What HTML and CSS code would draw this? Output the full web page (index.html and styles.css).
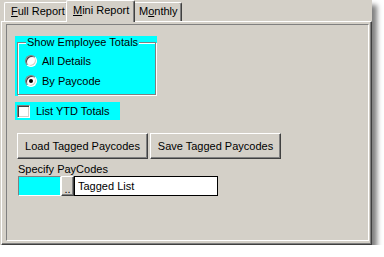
FILE: index.html
```html
<!DOCTYPE html>
<html lang="en">

<head>
    <meta charset="UTF-8">
    <meta name="viewport" content="width=device-width, initial-scale=1.0">
    <title>Mini Report</title>
    <link rel="stylesheet" href="styles.css">
</head>

<body>
    <div class="window">
        <div class="tabs">
            <div class="tab tab-full"><u>F</u>ull Report</div>
            <div class="tab tab-mini active"><u>M</u>ini Report</div>
            <div class="tab tab-monthly">M<u>o</u>nthly</div>
        </div>
        <div class="panel">
            <div class="page">
                <div class="group-wrap">
                    <div class="group">
                        <span class="legend">Show Employee Totals</span>
                        <div class="option"><span class="radio"></span>All Details</div>
                        <div class="option"><span class="radio checked"></span>By Paycode</div>
                    </div>
                </div>

                <div class="check-wrap"><span class="checkbox"></span>List YTD Totals</div>

                <div class="buttons">
                    <button class="btn btn-wide">Load Tagged Paycodes</button>
                    <button class="btn btn-wide">Save Tagged Paycodes</button>
                </div>

                <div class="label">Specify PayCodes</div>
                <div class="codes">
                    <div class="code-box"></div>
                    <button class="btn btn-dots">..</button>
                    <div class="code-field">Tagged List</div>
                </div>
            </div>
        </div>
    </div>
</body>

</html>
```

FILE: styles.css
```css
body {
    margin: 0;
    background-color: #fff;
    font-family: "Liberation Sans", Arial, sans-serif;
    font-size: 11px;
    color: #000;
}

.window {
    width: 372px;
    height: 245px;
    display: flex;
    flex-direction: column;
    background-color: #d4d0c8;
    box-shadow: 5px 5px 5px rgba(0, 0, 0, 0.5);
}

/* tab strip */
.tabs {
    height: 21px;
    flex-shrink: 0;
    display: flex;
    align-items: flex-end;
    padding-left: 4px;
}

.tab {
    box-sizing: border-box;
    height: 19px;
    padding: 2px 0 0 6px;
    line-height: 13px;
    white-space: nowrap;
    background-color: #d4d0c8;
    border-top: 1px solid #fff;
    border-left: 1px solid #fff;
    border-right: 1px solid #404040;
    border-radius: 2px 2px 0 0;
    box-shadow: inset -1px 0 0 #808080;
}

.tab-full {
    width: 64px;
}

.tab-mini {
    width: 69px;
}

.tab-monthly {
    width: 49px;
    padding-left: 5px;
}

.tab.active {
    height: 22px;
    padding-top: 3px;
    margin: 0 -2px -1px;
    position: relative;
    z-index: 1;
}

/* tab page */
.panel {
    flex: 1;
    display: flex;
    margin-left: 1px;
    border-top: 1px solid #fff;
    border-left: 1px solid #fff;
    border-right: 1px solid #404040;
    border-bottom: 1px solid #404040;
    box-shadow: inset -1px -1px 0 #808080;
}

.page {
    flex: 1;
    display: flex;
    flex-direction: column;
    align-items: flex-start;
    margin: 2px 2px 3px 4px;
    padding: 11px 0 0 8px;
    border: 1px solid;
    border-color: #808080 #fff #fff #808080;
}

/* group box */
.group-wrap {
    box-sizing: border-box;
    width: 142px;
    height: 60px;
    display: flex;
    flex-direction: column;
    padding: 6px 1px 1px 2px;
    background-color: #00ffff;
}

.group {
    flex: 1;
    display: flex;
    flex-direction: column;
    align-items: flex-start;
    border: 1px solid #808080;
    box-shadow: 1px 1px 0 #fff, inset 1px 1px 0 #fff;
}

.legend {
    margin: -7px 0 2px 8px;
    padding: 0 1px;
    line-height: 13px;
    background-color: #00ffff;
}

.option {
    height: 20px;
    display: flex;
    align-items: center;
    gap: 5px;
    padding-left: 7px;
}

.radio {
    box-sizing: border-box;
    width: 12px;
    height: 12px;
    display: flex;
    align-items: center;
    justify-content: center;
    border-radius: 50%;
    background-color: #fff;
    border: 1px solid;
    border-color: #808080 #fff #fff #808080;
    box-shadow: inset 1px 1px 0 #404040, inset -1px -1px 0 #d4d0c8;
}

.radio.checked::after {
    content: "";
    width: 4px;
    height: 4px;
    border-radius: 50%;
    background-color: #000;
}

/* checkbox */
.check-wrap {
    box-sizing: border-box;
    width: 105px;
    height: 18px;
    margin-top: 6px;
    padding-left: 2px;
    display: flex;
    align-items: center;
    gap: 6px;
    background-color: #00ffff;
}

.checkbox {
    box-sizing: border-box;
    width: 13px;
    height: 13px;
    background-color: #fff;
    border: 1px solid;
    border-color: #808080 #fff #fff #808080;
    box-shadow: inset 1px 1px 0 #404040, inset -1px -1px 0 #d4d0c8;
}

/* buttons */
.buttons {
    display: flex;
    gap: 2px;
    margin: 13px 0 0 2px;
}

.btn {
    box-sizing: border-box;
    padding: 0;
    font: inherit;
    color: #000;
    background-color: #d4d0c8;
    border: 1px solid;
    border-color: #fff #404040 #404040 #fff;
    box-shadow: inset -1px -1px 0 #808080;
}

.btn-wide {
    width: 131px;
    height: 26px;
}

.label {
    height: 14px;
    margin: 3px 0 0 3px;
    line-height: 14px;
}

.codes {
    height: 20px;
    display: flex;
    margin-left: 3px;
}

.code-box {
    box-sizing: border-box;
    width: 43px;
    background-color: #00ffff;
    border: 1px solid;
    border-color: #808080 #fff #fff #808080;
}

.btn-dots {
    width: 13px;
    padding-top: 6px;
    line-height: 10px;
}

.code-field {
    box-sizing: border-box;
    width: 144px;
    padding-left: 3px;
    line-height: 18px;
    background-color: #fff;
    border: 1px solid #000;
}
```
